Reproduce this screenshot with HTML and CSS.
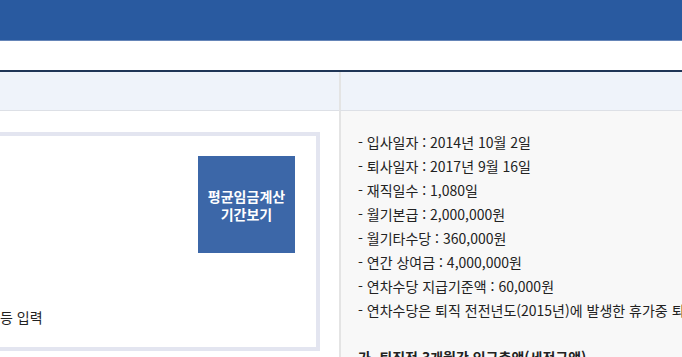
FILE: index.html
```html
<!DOCTYPE html>
<html lang="ko">
  <head>
    <meta charset="UTF-8" />
    <meta name="viewport" content="width=device-width, initial-scale=1.0" />
    <title>퇴직금 계산</title>
    <link rel="stylesheet" href="styles.css">
  </head>
  <body>
    <div class="top-bar"></div>
    <div class="sub-bar"></div>
    <div class="table">
      <div class="cell head"></div>
      <div class="cell head right"></div>
      <div class="cell body-left">
        <div class="input-box">
          <button class="period-btn">평균임금계산<br />기간보기</button>
          <p class="note">등 입력</p>
        </div>
      </div>
      <div class="cell body-right">
        <ul class="info-list">
          <li>- 입사일자 : 2014년 10월 2일</li>
          <li>- 퇴사일자 : 2017년 9월 16일</li>
          <li>- 재직일수 : 1,080일</li>
          <li>- 월기본급 : 2,000,000원</li>
          <li>- 월기타수당 : 360,000원</li>
          <li>- 연간 상여금 : 4,000,000원</li>
          <li>- 연차수당 지급기준액 : 60,000원</li>
          <li>- 연차수당은 퇴직 전전년도(2015년)에 발생한 휴가중 퇴직 전년도(2016년)에 미사용한 일수</li>
        </ul>
        <h4 class="sub-title">가. 퇴직전 3개월간 임금총액(세전금액)</h4>
      </div>
    </div>
  </body>
</html>
```

FILE: styles.css
```css
body {
  margin: 0;
  font-family: "Noto Sans CJK KR", "Noto Sans", sans-serif;
  color: #222;
  overflow: hidden;
}
.top-bar {
  height: 40px;
  background-color: #295aa0;
  border-bottom: 1px solid #6585b8;
}
.sub-bar {
  height: 29px;
  background-color: #fff;
  border-bottom: 2px solid #1f3556;
}
.table {
  display: grid;
  grid-template-columns: 339px minmax(0, 1fr);
}
.cell {
  min-width: 0;
}
.cell.head {
  height: 38px;
  background-color: #eff3fa;
  border-bottom: 1px solid #dde0e6;
}
.cell.right,
.body-right {
  border-left: 2px solid #e4e4e4;
}
.body-left {
  background-color: #fff;
  padding-top: 21px;
  overflow: hidden;
}
.input-box {
  margin-left: -40px;
  width: 352px;
  border: 4px solid #e3e5f0;
  background-color: #fff;
  display: flex;
  flex-direction: column;
  padding: 20px 0 20px;
}
.period-btn {
  align-self: flex-end;
  margin-right: 21px;
  width: 97px;
  height: 97px;
  border: none;
  background-color: #3c67a8;
  color: #fff;
  font-family: inherit;
  font-size: 14px;
  font-weight: 700;
  line-height: 18px;
  padding: 0;
}
.note {
  align-self: flex-start;
  margin: 54px 0 0 36px;
  font-size: 14px;
  line-height: 20px;
  white-space: nowrap;
}
.body-right {
  background-color: #f8f8f8;
  padding: 19px 0 0 17px;
  overflow: hidden;
  white-space: nowrap;
}
.info-list {
  list-style: none;
  margin: 0;
  padding: 0;
  font-size: 14px;
  line-height: 24px;
}
.sub-title {
  margin: 23px 0 0;
  font-size: 14px;
  font-weight: 700;
  line-height: 24px;
}
```
